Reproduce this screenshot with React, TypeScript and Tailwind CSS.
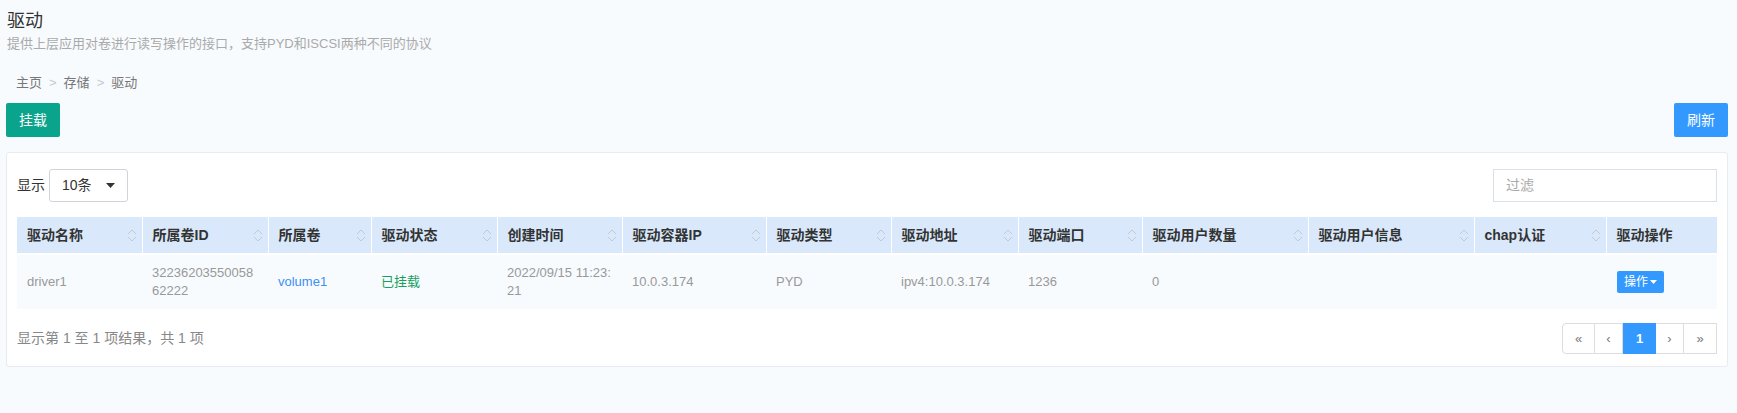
import React from "react";

const cols = [
  { name: "驱动名称", w: 125, sort: true },
  { name: "所属卷ID", w: 126, sort: true },
  { name: "所属卷", w: 103, sort: true },
  { name: "驱动状态", w: 126, sort: true },
  { name: "创建时间", w: 125, sort: true },
  { name: "驱动容器IP", w: 144, sort: true },
  { name: "驱动类型", w: 125, sort: true },
  { name: "驱动地址", w: 127, sort: true },
  { name: "驱动端口", w: 124, sort: true },
  { name: "驱动用户数量", w: 166, sort: true },
  { name: "驱动用户信息", w: 166, sort: true },
  { name: "chap认证", w: 132, sort: true },
  { name: "驱动操作", w: 110, sort: false },
];

function SortIcon() {
  return (
    <svg width="10" height="15" viewBox="0 0 10 15" fill="none" className="shrink-0">
      <path d="M1 6 L5 2 L9 6" stroke="#c4c9cf" strokeWidth="1" />
      <path d="M1 9 L5 13 L9 9" stroke="#c4c9cf" strokeWidth="1" />
    </svg>
  );
}

export default function App() {
  const font = { fontFamily: '"Liberation Sans", "Noto Sans CJK SC", sans-serif' };
  return (
    <div className="min-h-[413px] w-full bg-[#f7fbfe] pl-[6px] pr-[9px] pt-[8px]" style={font}>
      <div className="pl-[1px]">
        <h1 className="text-[18px] leading-[27px] text-[#333]">驱动</h1>
        <p className="text-[13px] leading-[18px] text-[#aaa]">提供上层应用对卷进行读写操作的接口，支持PYD和ISCSI两种不同的协议</p>
      </div>
      <div className="mt-[21px] pl-[10px] text-[13px] leading-[18px] text-[#777]">
        主页<span className="mx-[7px] text-[#c8c8c8]">&gt;</span>存储<span className="mx-[7px] text-[#c8c8c8]">&gt;</span>驱动
      </div>
      <div className="mt-[11px] flex items-center justify-between">
        <button className="h-[34px] w-[54px] rounded-[2px] bg-[#0aa38b] text-[14px] text-white">挂载</button>
        <button className="h-[34px] w-[54px] rounded-[2px] bg-[#3399ff] text-[14px] text-white">刷新</button>
      </div>
      <div className="mt-[15px] rounded-[3px] border border-[#e6ecf2] bg-white px-[10px] pb-[12px] pt-[16px]">
        <div className="flex items-center justify-between">
          <div className="flex items-center gap-[4px] text-[14px] text-[#333]">
            <span>显示</span>
            <div className="flex h-[33px] w-[79px] items-center justify-between rounded-[3px] border border-[#cfd4da] bg-white pl-[12px] pr-[12px]">
              <span>10条</span>
              <svg width="9" height="5" viewBox="0 0 9 5">
                <path d="M0 0 L9 0 L4.5 5 Z" fill="#333" />
              </svg>
            </div>
          </div>
          <div className="flex h-[33px] w-[224px] items-center border border-[#d9e0e8] bg-white pl-[12px] text-[14px] text-[#aaa]">
            过滤
          </div>
        </div>
        <table className="mt-[15px] w-full table-fixed border-collapse">
          <colgroup>
            {cols.map((c, i) => (
              <col key={i} style={i === cols.length - 1 ? undefined : { width: c.w }} />
            ))}
          </colgroup>
          <thead>
            <tr className="h-[36px] bg-[#d9e9fb]">
              {cols.map((c, i) => (
                <th
                  key={i}
                  className={`border-b-2 border-white p-0 text-left text-[14px] font-bold text-[#333] ${i < cols.length - 1 ? "border-r" : ""}`}
                >
                  <div className="flex h-[36px] items-center justify-between pl-[10px] pr-[5px]">
                    <span className="whitespace-nowrap">{c.name}</span>
                    {c.sort && <SortIcon />}
                  </div>
                </th>
              ))}
            </tr>
          </thead>
          <tbody>
            <tr className="h-[55px] bg-[#f7fbfe] text-[13px] leading-[18px] text-[#999]">
              <td className="px-[10px] align-middle break-all">driver1</td>
              <td className="px-[10px] align-middle break-all">3223620355005862222</td>
              <td className="px-[10px] align-middle text-[#3b8ff5]">volume1</td>
              <td className="px-[10px] align-middle text-[#16a05c]">已挂载</td>
              <td className="px-[10px] align-middle break-all">2022/09/15 11:23:21</td>
              <td className="px-[10px] align-middle">10.0.3.174</td>
              <td className="px-[10px] align-middle">PYD</td>
              <td className="px-[10px] align-middle">ipv4:10.0.3.174</td>
              <td className="px-[10px] align-middle">1236</td>
              <td className="px-[10px] align-middle">0</td>
              <td className="px-[10px] align-middle"></td>
              <td className="px-[10px] align-middle"></td>
              <td className="pl-[11px] align-middle">
                <button className="flex h-[22px] w-[47px] items-center justify-center gap-[2px] rounded-[2px] bg-[#3399ff] text-[12px] text-white">
                  <span>操作</span>
                  <svg width="7" height="4" viewBox="0 0 7 4">
                    <path d="M0 0 L7 0 L3.5 4 Z" fill="#fff" />
                  </svg>
                </button>
              </td>
            </tr>
          </tbody>
        </table>
        <div className="mt-[14px] flex items-center justify-between">
          <span className="text-[14px] text-[#888]">显示第 1 至 1 项结果，共 1 项</span>
          <div className="flex h-[31px] text-[13px] text-[#777]">
            <div className="flex w-[33px] items-center justify-center rounded-l-[4px] border border-[#dddddd]">«</div>
            <div className="flex w-[28px] items-center justify-center border-y border-r border-[#dddddd]">‹</div>
            <div className="flex w-[33px] items-center justify-center bg-[#3399ff] font-bold text-white">1</div>
            <div className="flex w-[28px] items-center justify-center border-y border-r border-[#dddddd]">›</div>
            <div className="flex w-[33px] items-center justify-center border-y border-r border-[#dddddd]">»</div>
          </div>
        </div>
      </div>
    </div>
  );
}
